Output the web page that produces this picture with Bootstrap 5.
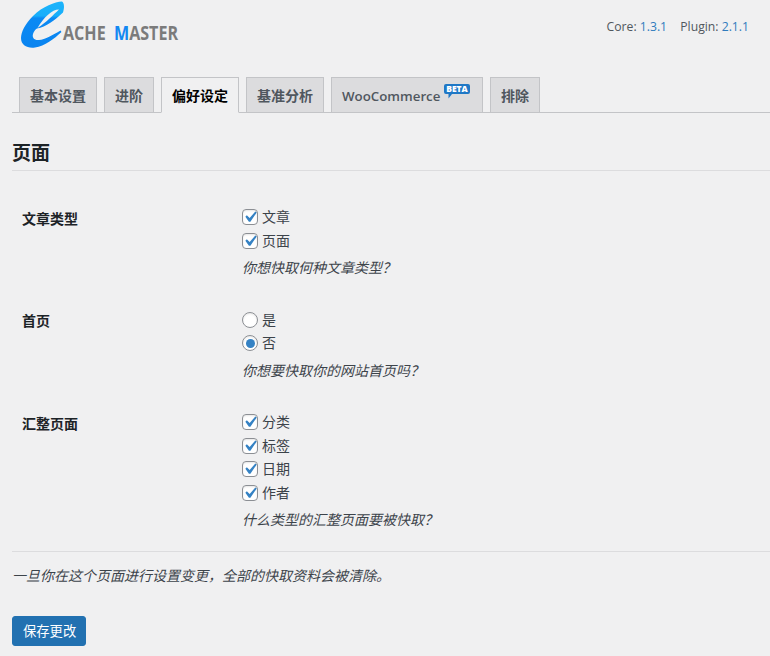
<!DOCTYPE html>
<html lang="zh-CN"><head><meta charset="utf-8"><title>Cache Master</title>
<link rel="stylesheet" href="https://cdn.jsdelivr.net/npm/bootstrap@5.3.0/dist/css/bootstrap.min.css">
<style>
html,body{height:656px;overflow:hidden}
body{background:#f0f0f1;color:#3c434a;font-family:"Open Sans","Noto Sans CJK SC",sans-serif;font-size:14px;line-height:1.4}
.cm-wrap{padding:0 0 0 12px}
.cm-head{height:77px;padding-right:21px}
.cm-logo{display:block;margin-left:7px;overflow:visible}
.cm-logo text{font-family:"Open Sans",sans-serif;font-weight:700;font-size:19.5px}
.cm-ver{padding-top:18px;font-size:12.2px;color:#50575e}
.cm-ver a{color:#2f7bbd;text-decoration:none;margin-right:10px}
.cm-ver a:last-child{margin-right:0}
.cm-tabs.nav{border-bottom:1px solid #c3c4c7;padding-left:7px;gap:7px;height:36px;flex-wrap:nowrap}
.cm-tabs .nav-link{background:#dcdcde;border:1px solid #c3c4c7;border-bottom:0;border-radius:0;color:#50575e;font-size:14px;font-weight:600;height:35px;line-height:20px;padding:8px 10px 6px;margin:0;position:relative;white-space:nowrap}
.cm-tabs .nav-link.active{background:#f0f0f1;color:#000;height:36px;border-bottom:1px solid #f0f0f1;margin-bottom:-1px}
.cm-beta{position:absolute;left:112px;top:6px;overflow:visible}
.cm-beta text{font-family:"Open Sans",sans-serif;font-weight:800;font-size:8.5px;fill:#fff}
.cm-tabs .cm-woo{padding-right:42px;font-size:13.3px;width:152px}
.cm-title{font-size:19px;font-weight:700;color:#1d2327;margin:0;padding:28px 0 5px;line-height:24px;border-bottom:1px solid #dcdcde}
.cm-row{padding-left:10px}
.cm-label{width:220px;flex:none;font-weight:700;color:#1d2327;font-size:14px;line-height:20px;padding-top:3px}
.cm-opt{margin:0;padding:0;min-height:0;height:23.5px;display:flex;align-items:center;gap:4px;font-size:14px}
.cm-opt .form-check-input{width:16px;height:16px;margin:0;float:none;border:1px solid #8c8f94;background-color:#fff;box-shadow:inset 0 1px 2px rgba(0,0,0,.1)}
.cm-opt .form-check-input[type=checkbox]{border-radius:4px}
.cm-opt .form-check-input:checked[type=checkbox]{background-color:#fff;background-size:22px;background-position:center;background-image:url("data:image/svg+xml,%3Csvg xmlns='http://www.w3.org/2000/svg' viewBox='0 0 20 20'%3E%3Cpath d='M14.83 4.89l1.34.94-5.81 8.38H9.02L5.78 9.67l1.34-1.25 2.57 2.4z' fill='%233582c4'/%3E%3C/svg%3E")}
.cm-opt .form-check-input:checked[type=radio]{background-color:#fff;background-size:9px;background-position:center;background-image:url("data:image/svg+xml,%3Csvg xmlns='http://www.w3.org/2000/svg' viewBox='0 0 8 8'%3E%3Ccircle cx='4' cy='4' r='4' fill='%233582c4'/%3E%3C/svg%3E")}
.cm-desc{font-style:italic;margin:5.5px 0 0;font-size:14px;line-height:20px;color:#3c434a}
.cm-sec1{margin-top:34.5px}.cm-sec2{margin-top:30px}.cm-sec3{margin-top:30px}
.cm-note{border-top:1px solid #dcdcde;margin:21px 0 0;padding-top:14px;font-style:italic;font-size:14px;line-height:20px;color:#3c434a}
.cm-save.btn{background:#2271b1;border:1px solid #2271b1;color:#fff;font-size:13.3px;border-radius:3px;padding:0 10px;width:74px;height:30px;line-height:28px;margin-top:30px;white-space:nowrap}
</style></head><body>
<div class="cm-wrap">
 <div class="cm-head d-flex justify-content-between align-items-start">
  <svg class="cm-logo" width="162" height="50" viewBox="19 0 162 50" role="img" aria-label="Cache Master">
   <defs><linearGradient id="cmg" x1="0" y1="0" x2="0" y2="1"><stop offset="0" stop-color="#1cb4fb"/><stop offset=".31" stop-color="#18aefa"/><stop offset=".36" stop-color="#0b8af4"/><stop offset="1" stop-color="#0a84f0"/></linearGradient></defs>
   <path fill="url(#cmg)" d="M62 1.500C55 2 43 6 33 16C25 24 21 32 21 38C21 45 27 48.500 35 47.500C45 46 54 39 61.500 32L60.500 30.500C53 35 45 39.500 39 40C34 40.500 32 37.500 33 34C34 31 35.500 29.500 37 28.500C46 27 55 20 63 12.500C64.500 8 64.500 3 62 1.500Z"/>
   <path fill="#f0f0f1" d="M59 9.500C52 9.500 44 17 37.500 28C47 22 53 15 59 9.500Z"/>
   <text transform="translate(63 40) scale(.825 1)" fill="#7b7b7b">ACHE&#160;&#160;<tspan fill="#1388f2">M</tspan>ASTER</text>
  </svg>
  <div class="cm-ver">Core: <a href="#">1.3.1</a> Plugin: <a href="#">2.1.1</a></div>
 </div>
 <ul class="nav cm-tabs">
  <li class="nav-item"><a class="nav-link" href="#">基本设置</a></li>
  <li class="nav-item"><a class="nav-link" href="#">进阶</a></li>
  <li class="nav-item"><a class="nav-link active" href="#">偏好设定</a></li>
  <li class="nav-item"><a class="nav-link" href="#">基准分析</a></li>
  <li class="nav-item"><a class="nav-link cm-woo" href="#">WooCommerce
    <svg class="cm-beta" width="26" height="15" viewBox="0 0 26 15"><path fill="#1f78c6" d="M2 0H24a2 2 0 0 1 2 2V8a2 2 0 0 1-2 2H8L4.500 14.500V10H2a2 2 0 0 1-2-2V2a2 2 0 0 1 2-2Z"/><text x="13" y="8.200" text-anchor="middle">BETA</text></svg></a></li>
  <li class="nav-item"><a class="nav-link" href="#">排除</a></li>
 </ul>
 <h2 class="cm-title">页面</h2>
 <div class="cm-row d-flex cm-sec1">
  <div class="cm-label">文章类型</div>
  <div>
   <div class="form-check cm-opt"><input class="form-check-input" type="checkbox" checked id="a1"><label for="a1">文章</label></div>
   <div class="form-check cm-opt"><input class="form-check-input" type="checkbox" checked id="a2"><label for="a2">页面</label></div>
   <p class="cm-desc">你想快取何种文章类型？</p>
  </div>
 </div>
 <div class="cm-row d-flex cm-sec2">
  <div class="cm-label">首页</div>
  <div>
   <div class="form-check cm-opt"><input class="form-check-input" type="radio" name="h" id="b1"><label for="b1">是</label></div>
   <div class="form-check cm-opt"><input class="form-check-input" type="radio" name="h" checked id="b2"><label for="b2">否</label></div>
   <p class="cm-desc">你想要快取你的网站首页吗？</p>
  </div>
 </div>
 <div class="cm-row d-flex cm-sec3">
  <div class="cm-label">汇整页面</div>
  <div>
   <div class="form-check cm-opt"><input class="form-check-input" type="checkbox" checked id="c1"><label for="c1">分类</label></div>
   <div class="form-check cm-opt"><input class="form-check-input" type="checkbox" checked id="c2"><label for="c2">标签</label></div>
   <div class="form-check cm-opt"><input class="form-check-input" type="checkbox" checked id="c3"><label for="c3">日期</label></div>
   <div class="form-check cm-opt"><input class="form-check-input" type="checkbox" checked id="c4"><label for="c4">作者</label></div>
   <p class="cm-desc">什么类型的汇整页面要被快取？</p>
  </div>
 </div>
 <p class="cm-note">一旦你在这个页面进行设置变更，全部的快取资料会被清除。</p>
 <button type="button" class="btn cm-save">保存更改</button>
</div>
<script src="https://cdn.jsdelivr.net/npm/bootstrap@5.3.0/dist/js/bootstrap.bundle.min.js"></script>
</body></html>
